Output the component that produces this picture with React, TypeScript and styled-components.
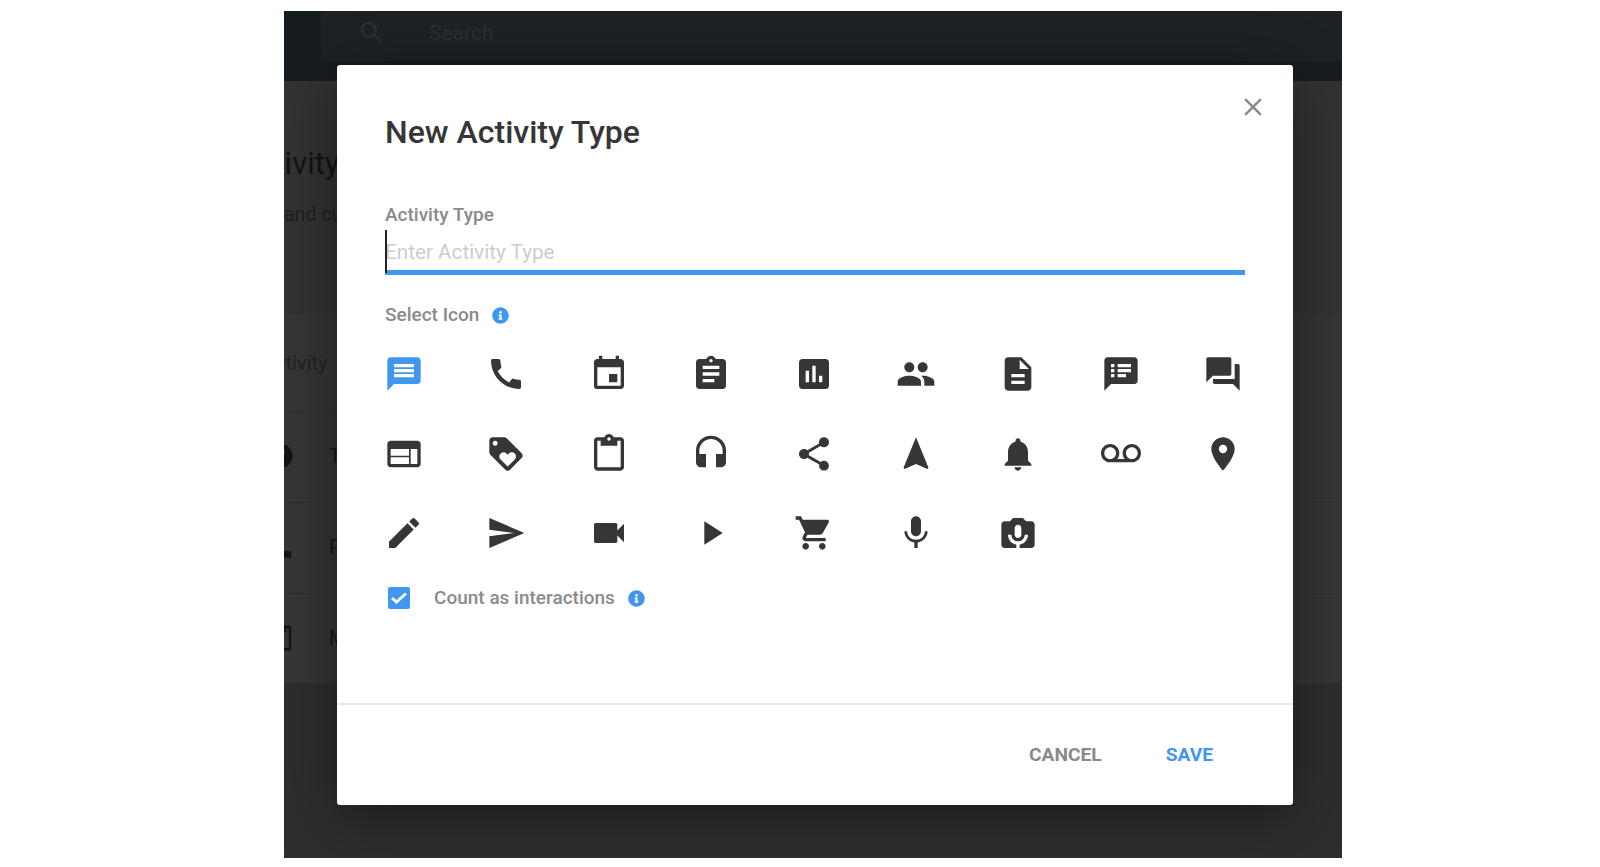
import React from "react";
import styled, { createGlobalStyle } from "styled-components";
import { IconType } from "react-icons";
import { FaInfoCircle } from "react-icons/fa";
import {
  MdMessage, MdCall, MdEvent, MdAssignment, MdAssessment, MdPeople, MdDescription, MdSpeakerNotes, MdQuestionAnswer,
  MdWeb, MdLoyalty, MdContentPaste, MdHeadset, MdShare, MdNavigation, MdNotifications, MdVoicemail, MdPlace,
  MdEdit, MdSend, MdVideocam, MdPlayArrow, MdShoppingCart, MdMic, MdPermCameraMic, MdClose, MdSearch,
  MdHelp,
} from "react-icons/md";

const Global = createGlobalStyle`
  html, body { margin: 0; padding: 0; background: #fff; }
  body { font-family: Roboto, "Liberation Sans", sans-serif; }
`;

const Page = styled.div`
  width: 1600px;
  height: 867px;
  padding: 11px 0 0 284px;
  box-sizing: border-box;
  overflow: hidden;
`;

const Frame = styled.div`
  position: relative;
  width: 1058px;
  height: 847px;
  background: #333333;
  overflow: hidden;
  display: flex;
  flex-direction: column;
`;

const TopBar = styled.header`
  height: 70px;
  flex: none;
  background: #171c1e;
  padding-left: 37px;
`;

const SearchBox = styled.div`
  height: 50px;
  background: #1e2225;
  display: flex;
  align-items: center;
  gap: 42px;
  padding: 0 0 7px 36px;
  box-sizing: border-box;
  color: #2c3033;
  font-size: 21px;
`;

const PageTitle = styled.h1`
  margin: 61px 0 0 -46px;
  font-size: 31px;
  line-height: 44px;
  font-weight: 400;
  color: #131313;
  white-space: nowrap;
`;

const PageSub = styled.p`
  margin: 16px 0 0 0;
  font-size: 19.5px;
  line-height: 26px;
  color: #1f1f1f;
  white-space: nowrap;
`;

const Card = styled.section`
  margin-top: 87px;
  height: 368px;
  flex: none;
  background: #363636;
`;

const CardHead = styled.div`
  height: 97px;
  display: flex;
  align-items: center;
  margin-left: -22px;
  font-size: 20px;
  color: #222222;
  border-bottom: 1px solid #2f2f2f;
  box-sizing: border-box;
`;

const Row = styled.div`
  height: 91px;
  display: flex;
  align-items: center;
  gap: 34px;
  margin-left: -19px;
  padding-bottom: 2px;
  font-size: 20px;
  color: #161616;
  border-bottom: 1px solid #2f2f2f;
  box-sizing: border-box;
  &:last-child { border-bottom: none; height: 89px; }
`;

const Lower = styled.div`
  flex: 1;
  background: #2e2e2e;
`;

const Modal = styled.div`
  position: absolute;
  left: 53px;
  top: 54px;
  width: 956px;
  height: 740px;
  background: #fff;
  border-radius: 3px;
  box-shadow: 0 12px 60px rgba(0, 0, 0, 0.45);
  display: flex;
  flex-direction: column;
  box-sizing: border-box;
`;

const CloseButton = styled.button`
  position: absolute;
  right: 25px;
  top: 27px;
  width: 30px;
  height: 30px;
  padding: 0;
  border: 0;
  background: none;
  color: #8a8a8a;
  display: flex;
`;

const Body = styled.div`
  padding: 49px 48px 0 48px;
`;

const Title = styled.h2`
  margin: 0;
  font-size: 32px;
  line-height: 36px;
  font-weight: 500;
  color: #363636;
`;

const FieldLabel = styled.label`
  display: block;
  margin-top: 53px;
  font-size: 19px;
  line-height: 24px;
  font-weight: 500;
  color: #8a8a8a;
`;

const InputWrap = styled.div`
  position: relative;
  margin-top: 3px;
  height: 45px;
  border-bottom: 5px solid #3f97f0;
  box-sizing: border-box;
`;

const TextInput = styled.input`
  width: 100%;
  height: 100%;
  border: 0;
  outline: 0;
  padding: 4px 0 0 0;
  box-sizing: border-box;
  background: none;
  font: 400 20.7px Roboto, sans-serif;
  &::placeholder { color: #cdcdcd; opacity: 1; }
`;

const Caret = styled.span`
  position: absolute;
  left: 0;
  top: 0;
  bottom: -3px;
  width: 2px;
  background: #222;
`;

const SectionLabel = styled.div`
  display: flex;
  align-items: center;
  gap: 13px;
  margin-top: 28px;
  font-size: 19px;
  line-height: 24px;
  font-weight: 500;
  color: #8a8a8a;
`;

const InfoIcon = styled(FaInfoCircle)`
  width: 17px;
  height: 17px;
  color: #3f97f0;
`;

const IconGrid = styled.div`
  display: grid;
  grid-template-columns: repeat(9, 40px);
  grid-auto-rows: 40px;
  row-gap: 39.5px;
  justify-content: space-between;
  margin: 27px 0 0 -1px;
  width: 859px;
`;

const IconCell = styled.div<{ $active?: boolean }>`
  width: 40px;
  height: 40px;
  color: ${(p) => (p.$active ? "#3f97f0" : "#363636")};
  svg { display: block; width: 40px; height: 40px; }
`;

const CheckRow = styled.div`
  display: flex;
  align-items: center;
  margin-top: 33px;
  padding-left: 3px;
  font-size: 19px;
  line-height: 24px;
  font-weight: 500;
  color: #8a8a8a;
`;

const CheckBox = styled.span`
  width: 22px;
  height: 22px;
  border-radius: 2px;
  background: #3f97f0;
  display: flex;
  margin-right: 24px;
`;

const CheckInfo = styled(InfoIcon)`
  margin-left: 13px;
`;

const Footer = styled.footer`
  margin-top: auto;
  height: 102px;
  padding: 0 80px 2px 0;
  border-top: 2px solid #e8e8e8;
  box-sizing: border-box;
  display: flex;
  align-items: center;
  justify-content: flex-end;
  gap: 64px;
`;

const ActionButton = styled.button<{ $primary?: boolean }>`
  border: 0;
  padding: 0;
  background: none;
  font: 700 19.2px Roboto, sans-serif;
  color: ${(p) => (p.$primary ? "#3f97f0" : "#8a8a8a")};
`;

const icons: IconType[] = [
  MdMessage, MdCall, MdEvent, MdAssignment, MdAssessment, MdPeople, MdDescription, MdSpeakerNotes, MdQuestionAnswer,
  MdWeb, MdLoyalty, MdContentPaste, MdHeadset, MdShare, MdNavigation, MdNotifications, MdVoicemail, MdPlace,
  MdEdit, MdSend, MdVideocam, MdPlayArrow, MdShoppingCart, MdMic, MdPermCameraMic,
];

export default function App() {
  return (
    <Page>
      <Global />
      <Frame>
        <TopBar>
          <SearchBox>
            <MdSearch size={30} />
            <span>Search</span>
          </SearchBox>
        </TopBar>
        <PageTitle>Activity</PageTitle>
        <PageSub>and cu</PageSub>
        <Card>
          <CardHead>Activity</CardHead>
          <Row><MdHelp size={30} color="#141414" /><span>Text</span></Row>
          <Row><MdCall size={30} color="#141414" /><span>Phone</span></Row>
          <Row><MdContentPaste size={30} color="#141414" /><span>Meeting</span></Row>
        </Card>
        <Lower />
        <Modal>
          <CloseButton aria-label="Close"><MdClose size={30} /></CloseButton>
          <Body>
            <Title>New Activity Type</Title>
            <FieldLabel>Activity Type</FieldLabel>
            <InputWrap>
              <TextInput placeholder="Enter Activity Type" readOnly />
              <Caret />
            </InputWrap>
            <SectionLabel>Select Icon <InfoIcon /></SectionLabel>
            <IconGrid>
              {icons.map((I, i) => (
                <IconCell key={i} $active={i === 0}><I /></IconCell>
              ))}
            </IconGrid>
            <CheckRow>
              <CheckBox>
                <svg width="22" height="22" viewBox="0 0 22 22" fill="none" stroke="#fff" strokeWidth="3">
                  <polyline points="4,11 8.5,15 18,6.5" />
                </svg>
              </CheckBox>
              Count as interactions
              <CheckInfo />
            </CheckRow>
          </Body>
          <Footer>
            <ActionButton>CANCEL</ActionButton>
            <ActionButton $primary>SAVE</ActionButton>
          </Footer>
        </Modal>
      </Frame>
    </Page>
  );
}
